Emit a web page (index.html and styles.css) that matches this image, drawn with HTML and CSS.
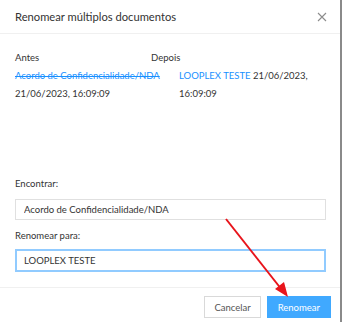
FILE: index.html
```html
<!DOCTYPE html>
<html lang="pt-BR">

<head>
  <meta charset="UTF-8">
  <meta name="viewport" content="width=device-width, initial-scale=1.0">
  <title>Renomear múltiplos documentos</title>
  <link rel="stylesheet" href="styles.css">
</head>

<body>
  <article class="modal">
    <header class="modal-header">
      <h2>Renomear múltiplos documentos</h2>
      <button type="button" class="close" aria-label="Fechar">
        <svg width="10" height="10" viewBox="0 0 10 10">
          <path d="M1 1L9 9M9 1L1 9" stroke="#8c8c8c" stroke-width="1.1" fill="none" />
        </svg>
      </button>
    </header>

    <section class="modal-body">
      <div class="compare-head">
        <span>Antes</span>
        <span>Depois</span>
      </div>
      <div class="compare-row">
        <p class="before">
          <s class="link">Acordo de Confidencialidade/NDA</s><br><span>21/06/2023, 16:09:09</span>
        </p>
        <p class="after">
          <span class="link">LOOPLEX TESTE</span> <span>21/06/2023,</span> <span>16:09:09</span>
        </p>
      </div>

      <form class="rename-form">
        <label for="find">Encontrar:</label>
        <input id="find" type="text" value="Acordo de Confidencialidade/NDA">
        <label for="replace">Renomear para:</label>
        <input id="replace" class="focused" type="text" value="LOOPLEX TESTE">
      </form>
    </section>

    <footer class="modal-footer">
      <button type="button" class="btn">Cancelar</button>
      <button type="button" class="btn primary">Renomear</button>
    </footer>

    <!-- seta de anotação -->
    <svg class="annotation" width="80" height="90" viewBox="0 0 80 90">
      <path d="M3 2L59 73" stroke="#e8141b" stroke-width="2" fill="none" />
      <path d="M65 80L52 72L61 65Z" fill="#e8141b" />
    </svg>
  </article>
</body>

</html>
```

FILE: styles.css
```css
* {
  box-sizing: border-box;
}

body {
  margin: 0;
  background: #fff;
  font-family: Lato, "Open Sans", sans-serif;
  color: #333;
}

.modal {
  position: relative;
  width: 342px;
  height: 322px;
  border-right: 2px solid #8a8a8a;
  display: flex;
  flex-direction: column;
}

.modal-header {
  height: 34px;
  padding: 0 13px 0 15px;
  display: flex;
  align-items: center;
  justify-content: space-between;
  border-bottom: 1px solid #f0f0f0;
}

.modal-header h2 {
  margin: 0;
  font-size: 11.2px;
  font-weight: 400;
  color: #333;
}

.close {
  border: 0;
  background: none;
  padding: 0;
  display: flex;
}

.modal-body {
  height: 253px;
  padding: 15px 14px 0 15px;
  font-size: 9.5px;
}

.compare-head {
  display: grid;
  grid-template-columns: 136px 1fr;
  line-height: 18px;
}

.compare-row {
  display: grid;
  grid-template-columns: 164px 1fr;
  line-height: 18px;
}

.compare-row p {
  margin: 0;
}

.after {
  max-width: 130px;
}

.link {
  color: #1890ff;
}

.rename-form {
  display: flex;
  flex-direction: column;
  margin-top: 72px;
}

.rename-form label {
  line-height: 18px;
  margin-bottom: 6px;
}

.rename-form input {
  height: 21px;
  padding: 0 8px;
  border: 1px solid #e0e0e0;
  font: inherit;
  color: #333;
  margin-bottom: 7px;
}

.rename-form input.focused {
  height: 23px;
  border: 2px solid #91cbff;
  padding: 0 7px;
  margin-top: -2px;
}

.modal-footer {
  flex: 1;
  border-top: 1px solid #f0f0f0;
  display: flex;
  align-items: flex-start;
  justify-content: flex-end;
  gap: 6px;
  padding: 8px 9px 0 0;
}

.btn {
  height: 22px;
  padding: 0 9px;
  border: 1px solid #d9d9d9;
  background: #fff;
  font: inherit;
  font-size: 9.5px;
  color: #555;
}

.btn.primary {
  background: #40a9ff;
  border-color: #40a9ff;
  color: #fff;
  padding: 0 10px;
}

.annotation {
  position: absolute;
  left: 223px;
  top: 217px;
}
```
